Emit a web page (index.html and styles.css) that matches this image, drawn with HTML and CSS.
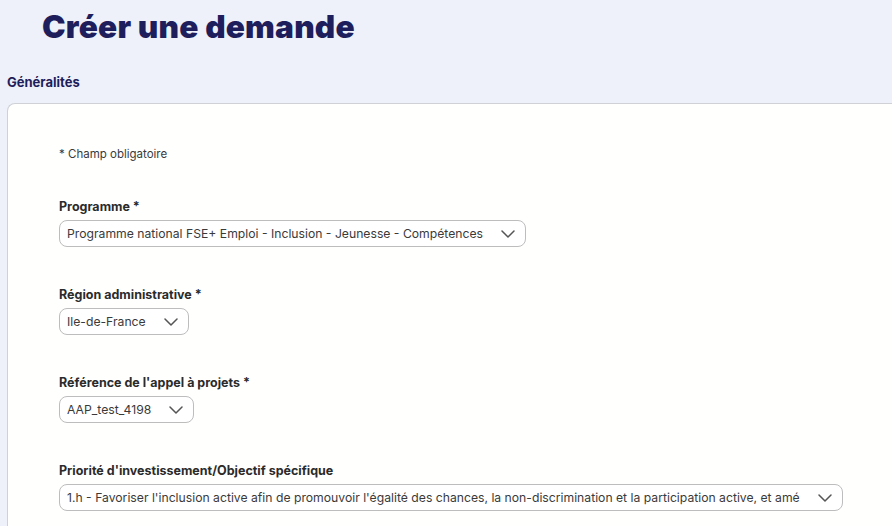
FILE: index.html
```html
<!DOCTYPE html>
<html lang="fr">
<head>
    <meta charset="UTF-8">
    <meta name="viewport" content="width=device-width, initial-scale=1.0">
    <title>Créer une demande</title>
    <link rel="stylesheet" href="styles.css">
</head>
<body>
    <div id="page">
        <h1 class="title">Créer une demande</h1>
        <h2 class="section-title">Généralités</h2>

        <div class="card">
            <p class="mandatory">* Champ obligatoire</p>

            <div class="field">
                <label class="label">Programme *</label>
                <div class="select">
                    <span class="select-value">Programme national FSE+ Emploi - Inclusion - Jeunesse - Compétences</span>
                    <svg class="chevron" width="14" height="8" viewBox="0 0 14 8"><path d="M1 1l6 6 6-6" fill="none" stroke="#555" stroke-width="1.5" stroke-linecap="round" stroke-linejoin="round"/></svg>
                </div>
            </div>

            <div class="field">
                <label class="label">Région administrative *</label>
                <div class="select">
                    <span class="select-value">Ile-de-France</span>
                    <svg class="chevron" width="14" height="8" viewBox="0 0 14 8"><path d="M1 1l6 6 6-6" fill="none" stroke="#555" stroke-width="1.5" stroke-linecap="round" stroke-linejoin="round"/></svg>
                </div>
            </div>

            <div class="field">
                <label class="label">Référence de l'appel à projets *</label>
                <div class="select">
                    <span class="select-value">AAP_test_4198</span>
                    <svg class="chevron" width="14" height="8" viewBox="0 0 14 8"><path d="M1 1l6 6 6-6" fill="none" stroke="#555" stroke-width="1.5" stroke-linecap="round" stroke-linejoin="round"/></svg>
                </div>
            </div>

            <div class="field">
                <label class="label">Priorité d'investissement/Objectif spécifique</label>
                <div class="select select-wide">
                    <span class="select-value">1.h - Favoriser l'inclusion active afin de promouvoir l'égalité des chances, la non-discrimination et la participation active, et améliorer l'employabilité</span>
                    <svg class="chevron" width="14" height="8" viewBox="0 0 14 8"><path d="M1 1l6 6 6-6" fill="none" stroke="#555" stroke-width="1.5" stroke-linecap="round" stroke-linejoin="round"/></svg>
                </div>
            </div>
        </div>
    </div>
</body>
</html>
```

FILE: styles.css
```css
html, body {
    margin: 0;
    height: 100%;
    overflow: hidden;
}

body {
    background-color: #eef1f9;
    font-family: Inter, "Open Sans", sans-serif;
    color: #333;
}

#page {
    padding: 0 0 0 7px;
}

.title {
    margin: 0;
    padding: 8px 0 0 35px;
    font-size: 31.6px;
    font-weight: 900;
    line-height: 38px;
    color: #1e1e5c;
    letter-spacing: 0.2px;
}

.section-title {
    margin: 28px 0 13px;
    font-size: 13px;
    font-weight: 700;
    line-height: 16px;
    color: #1e1e5c;
}

.card {
    background-color: #fffffe;
    border: 1px solid #cfd1d6;
    border-right: none;
    border-radius: 8px 0 0 0;
    padding: 42px 0 0 51px;
    min-height: 460px;
}

.mandatory {
    margin: 0 0 37px;
    font-size: 11.5px;
    line-height: 16px;
    color: #3a3a3a;
}

.field {
    margin-bottom: 40px;
}

.label {
    display: block;
    font-size: 12.5px;
    font-weight: 700;
    line-height: 16px;
    color: #2b2b2b;
    margin-bottom: 5px;
}

.select {
    display: inline-flex;
    align-items: center;
    gap: 18px;
    height: 27px;
    box-sizing: border-box;
    padding: 0 10px 0 7px;
    border: 1px solid #bdbdbd;
    border-radius: 8px;
    background-color: #fff;
    font-size: 12.2px;
    color: #3a3a3a;
}

.select-wide {
    width: 784px;
}

.select-value {
    white-space: nowrap;
    overflow: hidden;
    flex: 1;
}

.chevron {
    flex-shrink: 0;
}
```
